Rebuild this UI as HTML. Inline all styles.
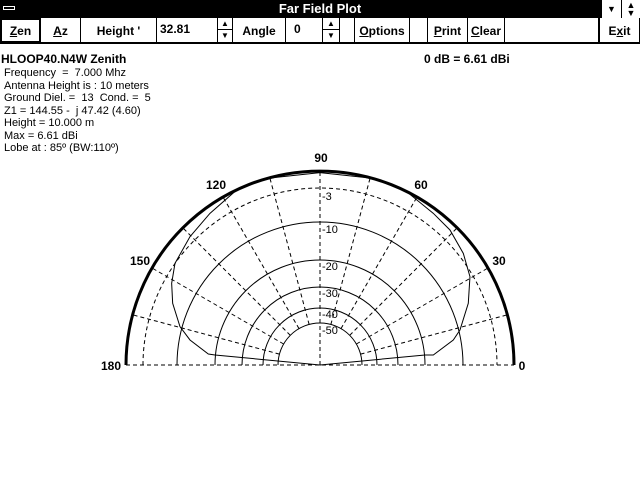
<!DOCTYPE html>
<html><head><style>
body{margin:0;width:640px;height:480px;background:#fff;position:relative;overflow:hidden;font-family:"Liberation Sans",sans-serif;}
.a{position:absolute;}
.tb{left:0;top:0;width:640px;height:18px;background:#000;color:#fff;font-weight:bold;font-size:13px;text-align:center;line-height:18px;}
.b{position:absolute;top:18px;height:25px;border-right:1px solid #000;border-bottom:1px solid #000;font-weight:bold;font-size:12px;line-height:26px;text-align:center;box-sizing:border-box;}
.t{font-size:11px;line-height:12.5px;left:4px;}
</style></head><body>
<div class="a tb">Far Field Plot</div>
<div class="a" style="left:0;top:0;width:18px;height:18px;background:#000"><div class="a" style="left:3px;top:6px;width:12px;height:4px;border:1px solid #fff;background:#000;box-sizing:border-box"></div></div>
<div class="a" style="left:601px;top:0;width:19px;height:18px;background:#fff;border-left:1px solid #000;font-size:9px;text-align:center;line-height:18px">▼</div>
<div class="a" style="left:621px;top:0;width:19px;height:18px;background:#fff;border-left:1px solid #000;font-size:9px;text-align:center;line-height:8px;padding-top:1px;box-sizing:border-box">▲<br>▼</div>
<div class="a" style="left:0;top:18px;width:640px;height:26px;border-bottom:1px solid #000;box-sizing:border-box"></div>
<div class="b" style="left:0;width:41px;border:2px solid #000;line-height:22px"><u>Z</u>en</div>
<div class="b" style="left:41px;width:40px"><u>A</u>z</div>
<div class="b" style="left:81px;width:76px">Height '</div>
<div class="b" style="left:157px;width:61px;text-align:left;padding-left:3px;line-height:22px">32.81</div>
<div class="b" style="left:218px;width:15px;font-size:8px;line-height:11px">▲<div style="border-top:1px solid #000">▼</div></div>
<div class="b" style="left:233px;width:53px">Angle</div>
<div class="b" style="left:286px;width:37px;text-align:left;padding-left:8px;line-height:22px">0</div>
<div class="b" style="left:323px;width:17px;font-size:8px;line-height:11px">▲<div style="border-top:1px solid #000">▼</div></div>
<div class="b" style="left:340px;width:15px"></div>
<div class="b" style="left:355px;width:55px"><u>O</u>ptions</div>
<div class="b" style="left:410px;width:18px"></div>
<div class="b" style="left:428px;width:40px"><u>P</u>rint</div>
<div class="b" style="left:468px;width:37px"><u>C</u>lear</div>
<div class="b" style="left:505px;width:94px"></div>
<div class="b" style="left:599px;width:41px;border-left:1px solid #000">E<u>x</u>it</div>
<div class="a" style="left:1px;top:52px;font-size:12px;font-weight:bold">HLOOP40.N4W Zenith</div>
<div class="a t" style="top:67px">Frequency &nbsp;= &nbsp;7.000 Mhz<br>Antenna Height is : 10 meters<br>Ground Diel. = &nbsp;13 &nbsp;Cond. = &nbsp;5<br>Z1 = 144.55 - &nbsp;j 47.42 (4.60)<br>Height = 10.000 m<br>Max = 6.61 dBi<br>Lobe at : 85º (BW:110º)</div>
<div class="a" style="left:424px;top:52px;font-size:12px;font-weight:bold">0 dB = 6.61 dBi</div>
<svg class="a" style="left:0;top:0" width="640" height="480">
<g fill="none" stroke="#000" stroke-width="1">
<path d="M126,365 A194,194 0 0 1 514,365" stroke-width="3"/>
<path d="M143,365 A177,177 0 0 1 497,365" stroke-dasharray="4,3"/>
<path d="M177,365 A143,143 0 0 1 463,365"/>
<path d="M215,365 A105,105 0 0 1 425,365"/>
<path d="M242,365 A78,78 0 0 1 398,365"/>
<path d="M263,365 A57,57 0 0 1 377,365"/>
<path d="M278,365 A42,42 0 0 1 362,365"/>
<line x1="126" y1="365" x2="514" y2="365" stroke-dasharray="4,3"/>
<line x1="320" y1="365" x2="320" y2="171" stroke-dasharray="4,3"/>
<g stroke-dasharray="4,3">
<line x1="362" y1="365" x2="514" y2="365" transform="rotate(-15 320 365)"/>
<line x1="362" y1="365" x2="514" y2="365" transform="rotate(-30 320 365)"/>
<line x1="362" y1="365" x2="514" y2="365" transform="rotate(-45 320 365)"/>
<line x1="362" y1="365" x2="514" y2="365" transform="rotate(-60 320 365)"/>
<line x1="362" y1="365" x2="514" y2="365" transform="rotate(-75 320 365)"/>
<line x1="362" y1="365" x2="514" y2="365" transform="rotate(-105 320 365)"/>
<line x1="362" y1="365" x2="514" y2="365" transform="rotate(-120 320 365)"/>
<line x1="362" y1="365" x2="514" y2="365" transform="rotate(-135 320 365)"/>
<line x1="362" y1="365" x2="514" y2="365" transform="rotate(-150 320 365)"/>
<line x1="362" y1="365" x2="514" y2="365" transform="rotate(-165 320 365)"/>
</g>
<polyline vector-effect="non-scaling-stroke" transform="translate(100,150) scale(0.3333)" points="660,645 345,615 325,612 270,570 240,530 218,460 215,400 225,340 270,260 330,190 410,120 500,85 660,68 820,85 920,125 1000,190 1050,240 1090,310 1110,380 1105,460 1080,540 1060,570 1000,615 975,615 660,645"/>
</g>
<g font-family="Liberation Sans,sans-serif" font-size="12" font-weight="bold" text-anchor="middle">
<text x="321" y="162">90</text><text x="216" y="189">120</text><text x="421" y="189">60</text>
<text x="140" y="265">150</text><text x="499" y="265">30</text>
<text x="111" y="370">180</text><text x="522" y="370">0</text>
</g>
<g font-family="Liberation Sans,sans-serif" font-size="11">
<text x="322" y="200">-3</text><text x="322" y="233">-10</text><text x="322" y="270">-20</text>
<text x="322" y="297">-30</text><text x="322" y="318">-40</text><text x="322" y="334">-50</text>
</g>
</svg>
</body></html>
